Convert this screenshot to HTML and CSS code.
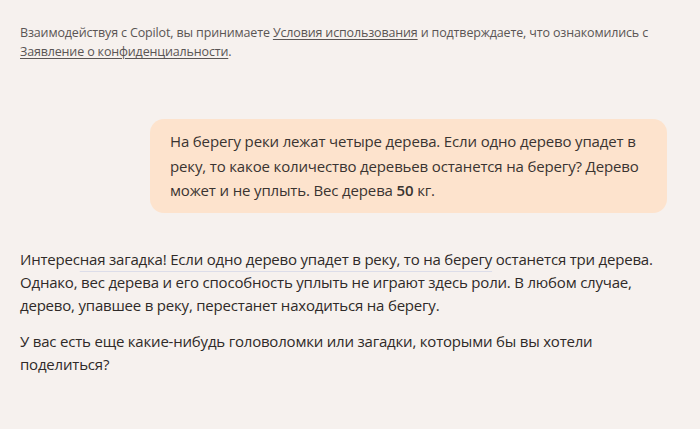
FILE: index.html
```html
<!DOCTYPE html>
<html lang="ru">
<head>
<meta charset="utf-8">
<link rel="stylesheet" href="styles.css">
</head>
<body>
<main class="chat">
  <p class="disclaimer">Взаимодействуя с Copilot, вы принимаете <a href="#">Условия использования</a> и подтверждаете, что ознакомились с <a href="#">Заявление о конфиденциальности</a>.</p>
  <div class="user-row">
    <div class="bubble">На берегу реки лежат четыре дерева. Если одно дерево упадет в реку, то какое количество деревьев останется на берегу? Дерево может и не уплыть. Вес дерева <b class="num">50</b> кг.</div>
  </div>
  <div class="answer">
    <p>Интерес<span class="hl">ная загадка! Если одно дерево упадет в реку, то на берегу</span> останется три дерева. Однако, вес дерева и его способность уплыть не играют здесь роли. В любом случае, дерево, упавшее в реку, перестанет находиться на берегу.</p>
    <p>У вас есть еще какие-нибудь головоломки или загадки, которыми бы вы хотели поделиться?</p>
  </div>
</main>
</body>
</html>
```
FILE: styles.css
```css
html, body {
  margin: 0;
  background: #f6f1ee;
}
body {
  font-family: "Open Sans", "Noto Sans", sans-serif;
  color: #2f2a28;
  width: 700px;
  height: 429px;
  overflow: hidden;
}
.chat {
  padding: 0 33px 0 20px;
}
.disclaimer {
  margin: 0;
  padding-top: 23px;
  font-size: 12.5px;
  line-height: 19px;
  color: #5a5554;
  letter-spacing: -0.15px;
}
.disclaimer a {
  color: #5a5554;
  text-decoration: underline;
  text-underline-offset: 2px;
}
.user-row {
  display: flex;
  justify-content: flex-end;
  margin-top: 58px;
}
.bubble {
  width: 477px;
  padding: 10px 20px;
  background: #fde3cd;
  border-radius: 14px;
  font-size: 15px;
  letter-spacing: -0.15px;
  line-height: 24.5px;
  color: #3a3431;
}
.num {
  font-weight: 600;
}
.answer {
  margin-top: 35px;
  font-size: 15px;
  letter-spacing: -0.2px;
  line-height: 23px;
  color: #2f2a28;
}
.answer p {
  margin: 0 0 13px;
}
.hl {
  text-decoration: underline;
  text-decoration-color: #dcdde9;
  text-underline-offset: 6px;
}
```
